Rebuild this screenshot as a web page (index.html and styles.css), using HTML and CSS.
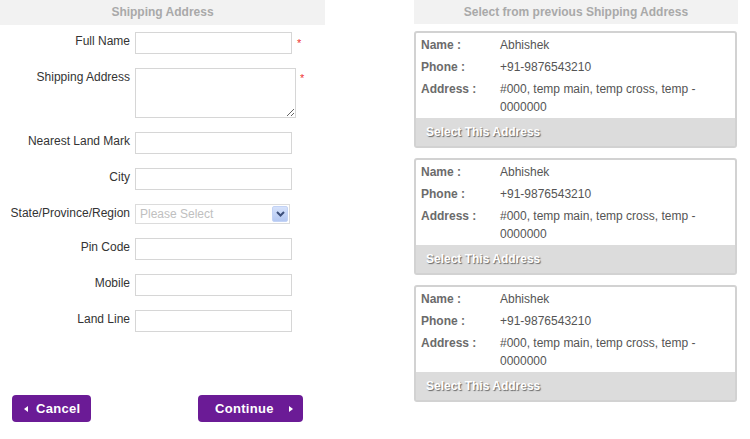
FILE: index.html
```html
<!DOCTYPE html>
<html>
<head>
<meta charset="utf-8">
<link rel="stylesheet" href="styles.css">
</head>
<body>
<div class="page">
  <div class="left">
    <div class="head">Shipping Address</div>
    <div class="form">
      <div class="row"><label>Full Name</label><input class="inp" type="text"><span class="req">*</span></div>
      <div class="row"><label>Shipping Address</label><textarea class="ta"></textarea><span class="req req-ta">*</span></div>
      <div class="row"><label>Nearest Land Mark</label><input class="inp" type="text"></div>
      <div class="row"><label>City</label><input class="inp" type="text"></div>
      <div class="row"><label>State/Province/Region</label>
        <div class="sel"><span class="ph">Please Select</span><span class="dd"><svg width="9" height="6" viewBox="0 0 9 6"><path d="M1 1 L4.5 4.5 L8 1" fill="none" stroke="#3c4f7a" stroke-width="2"/></svg></span></div>
      </div>
      <div class="row"><label>Pin Code</label><input class="inp" type="text"></div>
      <div class="row"><label>Mobile</label><input class="inp" type="text"></div>
      <div class="row"><label>Land Line</label><input class="inp" type="text"></div>
    </div>
    <div class="btns">
      <button class="btn cancel"><span class="tri tri-l"></span>Cancel</button>
      <button class="btn cont">Continue<span class="tri tri-r"></span></button>
    </div>
  </div>
  <div class="right">
    <div class="head">Select from previous Shipping Address</div>
    <div class="card">
      <div class="info">
        <div class="r"><span class="k">Name :</span><span class="v">Abhishek</span></div>
        <div class="r"><span class="k">Phone :</span><span class="v">+91-9876543210</span></div>
        <div class="r"><span class="k">Address :</span><span class="v">#000, temp main, temp cross, temp - 0000000</span></div>
      </div>
      <div class="pick">Select This Address</div>
    </div>
    <div class="card">
      <div class="info">
        <div class="r"><span class="k">Name :</span><span class="v">Abhishek</span></div>
        <div class="r"><span class="k">Phone :</span><span class="v">+91-9876543210</span></div>
        <div class="r"><span class="k">Address :</span><span class="v">#000, temp main, temp cross, temp - 0000000</span></div>
      </div>
      <div class="pick">Select This Address</div>
    </div>
    <div class="card">
      <div class="info">
        <div class="r"><span class="k">Name :</span><span class="v">Abhishek</span></div>
        <div class="r"><span class="k">Phone :</span><span class="v">+91-9876543210</span></div>
        <div class="r"><span class="k">Address :</span><span class="v">#000, temp main, temp cross, temp - 0000000</span></div>
      </div>
      <div class="pick">Select This Address</div>
    </div>
  </div>
</div>
</body>
</html>
```
FILE: styles.css
```css
* { box-sizing: border-box; }
html, body { margin: 0; padding: 0; background: #fff; }
body { font-family: "Liberation Sans", Arial, sans-serif; font-size: 12px; color: #333; }
.page { display: flex; width: 750px; }
.left { width: 325px; }
.right { width: 324px; margin-left: 89px; }
.head {
  background: #f2f2f2; height: 25px; line-height: 25px; text-align: center;
  font-weight: bold; color: #a9a9a9; font-size: 12px;
}
.right .head { height: 24px; line-height: 24px; }
.form { padding-top: 7px; display: flex; flex-direction: column; gap: 14px; }
.row { display: flex; align-items: flex-start; }
.row label {
  width: 135px; padding-right: 5px; text-align: right; line-height: 18px;
  color: #333; font-size: 12px;
}
.inp {
  width: 157px; height: 22px; border: 1px solid #d6d6d6; margin: 0; padding: 2px 4px;
  font: inherit; background: #fff; outline: none;
}
.ta {
  width: 161px; height: 50px; border: 1px solid #d6d6d6; margin: 0; padding: 2px;
  font: inherit; resize: both; outline: none;
}
.req { color: #e33; margin-left: 5px; font-size: 11px; line-height: 22px; }
.req-ta { margin-left: 4px; line-height: 20px; }
.sel {
  width: 155px; height: 20px; border: 1px solid #dcdcdc; display: flex; align-items: center;
  justify-content: space-between; padding: 0 1px 0 4px;
}
.ph { color: #c0c0c0; font-size: 12px; }
.dd {
  width: 16px; height: 16px; display: flex; align-items: center; justify-content: center;
  background: linear-gradient(#d6e2fb, #b4c8f2); border: 1px solid #c3d3f5; border-radius: 2px;
}
.btns { display: flex; justify-content: space-between; padding: 0 22px 0 12px; margin-top: 63px; }
.btn {
  background: #6b1b96; color: #fff; border: none; border-radius: 4px; height: 27px;
  font-family: "Liberation Sans", Arial, sans-serif; font-weight: bold; font-size: 13px;
  display: flex; align-items: center; padding: 0; letter-spacing: 0.3px;
}
.cancel { width: 79px; padding-left: 12px; }
.cont { width: 105px; padding-left: 17px; }
.tri { width: 0; height: 0; border-top: 3.5px solid transparent; border-bottom: 3.5px solid transparent; }
.tri-l { border-right: 4px solid #fff; margin-right: 8px; }
.tri-r { border-left: 4px solid #fff; margin-left: 15px; }
.card {
  width: 323px; margin-top: 7px; border: 2px solid #d2d2d2; border-radius: 3px; background: #fff;
}
.card + .card { margin-top: 10px; }
.info { padding: 1px 5px 0 5px; }
.r { display: flex; padding: 2px 0; line-height: 18px; }
.k { width: 79px; flex: none; font-weight: bold; color: #6b6b6b; }
.v { color: #555; padding-right: 20px; }
.pick {
  background: #dcdcdc; height: 28px; line-height: 28px; padding-left: 10px; font-weight: bold;
  color: #fff; text-shadow: 1px 1px 1px #666;
}
```
